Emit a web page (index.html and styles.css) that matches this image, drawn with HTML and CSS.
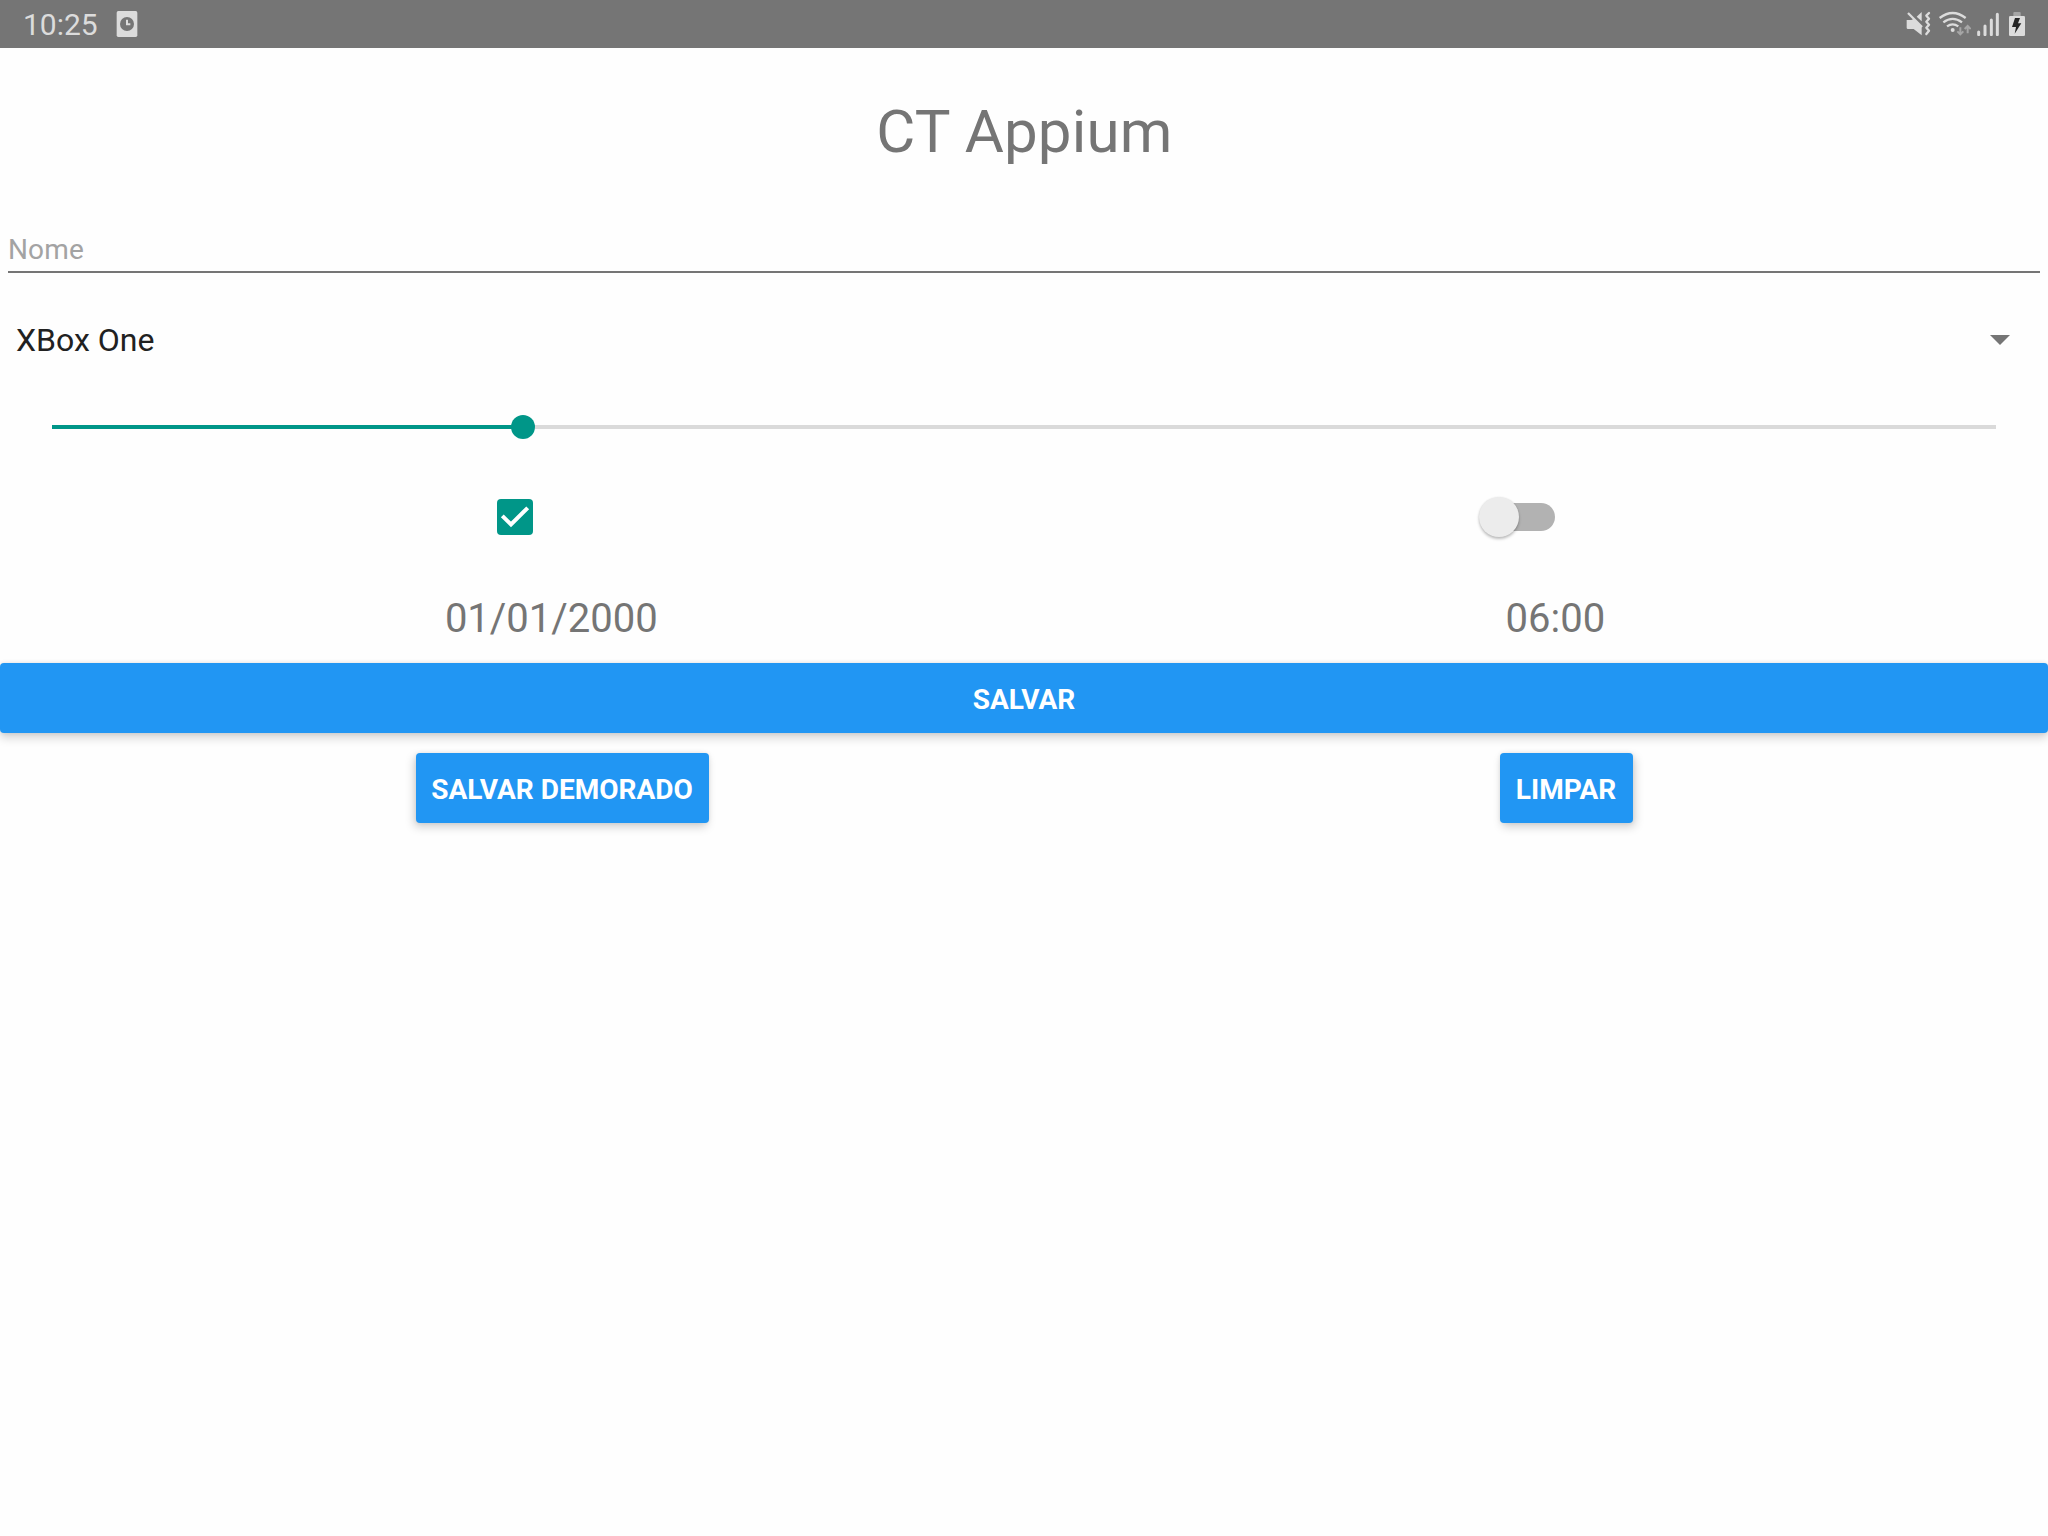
FILE: index.html
```html
<!DOCTYPE html>
<html lang="pt-BR">
<head>
<meta charset="utf-8">
<title>CT Appium</title>
<link rel="stylesheet" href="styles.css">
</head>
<body>
<header class="status">
  <span class="clock">10:25</span>
  <svg class="alarm" viewBox="348 30 66 84">
    <rect x="350" y="33" width="62" height="78" rx="5" fill="#dcdcdc"/>
    <circle cx="381" cy="72" r="21" fill="#757575"/>
    <path d="M381 59V73H391" fill="none" stroke="#dcdcdc" stroke-width="6"/>
  </svg>
  <div class="indicators">
    <svg class="mute" viewBox="48 33 75 75">
      <path d="M50 60H64L72 56L95 79V106L71 87H54Q50 87 50 83Z" fill="#dcdcdc"/>
      <path d="M80 50L95 36V64Z" fill="#dcdcdc"/>
      <path d="M54 39L96 81" stroke="#dcdcdc" stroke-width="7"/>
      <path d="M117 39L109 47L117 56L109 65L117 74L109 83L117 92L109 102" fill="none" stroke="#dcdcdc" stroke-width="7" stroke-linejoin="round" stroke-linecap="round"/>
    </svg>
    <svg class="wifi" viewBox="144 33 99 75">
      <g fill="none" stroke="#dcdcdc" stroke-width="7">
        <path d="M149 54Q188 24 227 54"/>
        <path d="M160 67Q188 46 216 67"/>
        <path d="M171 79Q188 67 205 79"/>
      </g>
      <circle cx="188" cy="90" r="6" fill="#dcdcdc"/>
      <g fill="none" stroke="#a6a6a6" stroke-width="6">
        <path d="M211 82V102M202 94L211 103L220 94"/>
        <path d="M233 100V79M224 87L233 78L242 87"/>
      </g>
    </svg>
    <svg class="signal" viewBox="258 33 72 75">
      <path d="M266 96V104M285 78V104M304 60V104M322 43V104" stroke="#dcdcdc" stroke-width="9" stroke-linecap="round"/>
    </svg>
    <svg class="battery" viewBox="354 33 54 78">
      <path d="M370 48V39Q370 36 373 36H389Q392 36 392 39V48Z" fill="#a6a6a6"/>
      <rect x="357" y="48" width="48" height="60" rx="4" fill="#dcdcdc"/>
      <path d="M375 54H390L384 70H394L374 101L378 81H366Z" fill="#252525"/>
    </svg>
  </div>
</header>
<main class="form">
  <h1 class="title">CT Appium</h1>
  <div class="field"><span class="placeholder">Nome</span></div>
  <div class="picker">
    <span class="picker-value">XBox One</span>
    <svg class="arrow" viewBox="0 0 20 10"><path d="M0 0H20L10 10Z" fill="#757575"/></svg>
  </div>
  <div class="slider">
    <div class="slider-fill"></div>
    <div class="slider-thumb"></div>
    <div class="slider-rest"></div>
  </div>
  <div class="row toggles">
    <div class="checkbox">
      <svg class="box" viewBox="0 0 36 36"><rect width="36" height="36" rx="4" fill="#009688"/><path d="M5.3 16.8L14 25.5L30.7 8.8" fill="none" stroke="#fff" stroke-width="4"/></svg>
    </div>
    <div class="switch"><div class="track"><div class="knob"></div></div></div>
  </div>
  <div class="row moments">
    <span class="moment">01/01/2000</span>
    <span class="moment">06:00</span>
  </div>
  <button class="button wide">SALVAR</button>
  <div class="row actions">
    <button class="button slow">SALVAR DEMORADO</button>
    <button class="button clear">LIMPAR</button>
  </div>
</main>
</body>
</html>
```

FILE: styles.css
```css
* { box-sizing: border-box; }
body {
  margin: 0;
  height: 1536px;
  overflow: hidden;
  background: #fefefe;
  font-family: Roboto, "Liberation Sans", sans-serif;
  color: #757575;
}
svg { display: block; flex: none; }

.status {
  display: flex;
  align-items: flex-start;
  height: 48px;
  padding: 0 22px 0 23px;
  background: #757575;
  color: #dcdcdc;
}
.clock { width: 93px; font-size: 30px; line-height: 49px; }
.alarm { width: 22px; height: 28px; margin-top: 10px; }
.indicators { display: flex; margin: 11px 0 0 auto; }
.mute { width: 25px; height: 25px; margin-right: 7px; }
.wifi { width: 33px; height: 25px; margin-right: 5px; }
.signal { width: 24px; height: 25px; margin-right: 8px; }
.battery { width: 18px; height: 26px; }

.form { display: flex; flex-direction: column; }
.title {
  margin: 0;
  height: 167px;
  padding-left: 1px;
  line-height: 167px;
  font-size: 60px;
  font-weight: 400;
  letter-spacing: .2px;
  text-align: center;
}
.field {
  height: 58px;
  margin: 0 8px;
  border-bottom: 2px solid #757575;
}
.placeholder {
  display: block;
  font-size: 28px;
  line-height: 69px;
  letter-spacing: .15px;
  color: #a3a3a3;
}
.picker {
  display: flex;
  align-items: center;
  justify-content: space-between;
  height: 100px;
  margin-top: 17px;
  padding: 0 38px 0 16px;
}
.picker-value { font-size: 32px; color: #212121; }
.arrow { width: 20px; height: 10px; }

.slider {
  display: flex;
  align-items: center;
  height: 74px;
  padding: 0 52px;
}
.slider-fill { width: 460px; height: 4px; background: #009688; }
.slider-thumb {
  width: 24px;
  height: 24px;
  margin-left: -1px;
  border-radius: 50%;
  background: #009688;
}
.slider-rest { flex: 1; height: 4px; background: #dadada; }

.row { display: flex; justify-content: space-around; padding: 0 20px; }
.toggles { align-items: center; height: 106px; }
.checkbox { width: 64px; padding-left: 14px; }
.box { width: 36px; height: 36px; }
.switch { width: 92px; padding-left: 12px; }
.track {
  display: flex;
  align-items: center;
  width: 70px;
  height: 28px;
  border-radius: 14px;
  background: #b2b2b2;
}
.knob {
  flex: none;
  width: 40px;
  height: 40px;
  margin-left: -6px;
  border-radius: 50%;
  background: #ececec;
  box-shadow: 0 2px 3px rgba(0, 0, 0, .25), 0 0 2px rgba(0, 0, 0, .08);
}
.moments { height: 93px; padding: 0 19px 0 21px; }
.moment { font-size: 40px; line-height: 97px; }

.button {
  height: 70px;
  padding: 0;
  border: 0;
  border-radius: 4px;
  background: #2196f3;
  color: #fff;
  font: 700 28px/73px Roboto, "Liberation Sans", sans-serif;
}
.wide { box-shadow: 0 5px 10px rgba(0, 0, 0, .17), 0 0 4px rgba(0, 0, 0, .1); }
.actions { margin-top: 20px; }
.slow { width: 293px; box-shadow: -2px 4px 10px rgba(0, 0, 0, .18), 0 0 4px rgba(0, 0, 0, .08); }
.clear { width: 133px; box-shadow: 2px 4px 10px rgba(0, 0, 0, .18), 0 0 4px rgba(0, 0, 0, .08); }
```
